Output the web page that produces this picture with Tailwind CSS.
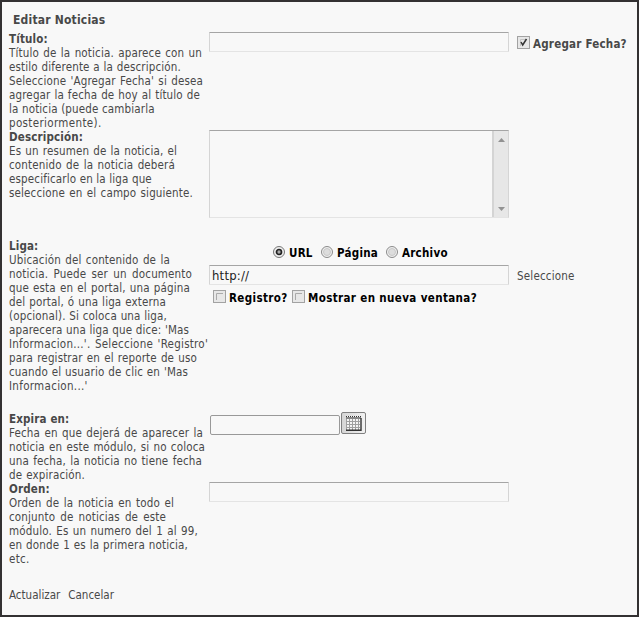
<!DOCTYPE html>
<html lang="es">
<head>
<meta charset="utf-8">
<title>Editar Noticias</title>
<script src="https://cdn.jsdelivr.net/npm/@tailwindcss/browser@4"></script>
</head>
<body class="h-[617px] w-[639px] overflow-hidden border-2 border-[#333132] bg-[#f8f8f8] pt-[9px] pl-[7px] font-['DejaVu_Sans_Condensed','DejaVu_Sans',sans-serif] text-[11.5px] leading-[14px] text-[#484848] [font-stretch:condensed]">
<h1 class="h-[21px] pl-1 text-[12px] leading-[18px] font-bold tracking-[0.2px]">Editar Noticias</h1>
<form class="whitespace-nowrap">
  <section class="flex h-[98px]">
    <div class="w-[200px] shrink-0 tracking-[0.15px] [&>p]:[text-align-last:justify]"><b class="block">Título:</b>
      <p class="w-[193px]">Título de la noticia. aparece con un</p>
      <p class="w-[172px]">estilo diferente a la descripción.</p>
      <p class="w-[194px]">Seleccione 'Agregar Fecha' si desea</p>
      <p class="w-[191px]">agregar la fecha de hoy al título de</p>
      <p class="w-[144px]">la noticia (puede cambiarla</p>
      <p class="w-[93px] tracking-[0.35px]">posteriormente).</p>
    </div>
    <input class="block h-5 w-[300px] rounded-[1px] border border-[#d5d5d5] border-t-[#a5a5a5] border-b-[#e4e4e4]">
    <label class="mt-1 ml-2 flex h-[14px] items-start font-bold tracking-[0.22px]"><svg class="mr-[3px]" width="13" height="13"><rect x=".5" y=".5" width="12" height="12" fill="#e7e7e7" stroke="#555" stroke-dasharray="1 1"/><path d="M3.5 10V3.5H10" fill="none" stroke="#c4c4c4"/><path d="M4 6L5.7 9L9.5 3" fill="none" stroke="#333" stroke-width="1.5"/></svg><span class="pt-px">Agregar Fecha?</span></label>
  </section>
  <section class="flex h-[109px]">
    <div class="w-[200px] shrink-0 tracking-[0.15px] [&>p]:[text-align-last:justify]"><b class="block">Descripción:</b>
      <p class="w-[168px]">Es un resumen de la noticia, el</p>
      <p class="w-[166px]">contenido de la noticia deberá</p>
      <p class="w-[141px]">especificarlo en la liga que</p>
      <p class="w-[184px]">seleccione en el campo siguiente.</p>
    </div>
    <div class="flex h-[88px] w-[300px] justify-end border border-[#d5d5d5] border-t-[#a5a5a5] border-b-[#e4e4e4]">
      <div class="flex w-4 flex-col items-center justify-between border-l-2 border-[#d4d4d4] bg-[#e7e7e7] pt-[7px] pb-[6px]"><svg width="7" height="4"><path d="M0 4L3.5 0L7 4Z" fill="#929292"/></svg><svg width="7" height="4"><path d="M0 0H7L3.5 4Z" fill="#929292"/></svg></div>
    </div>
  </section>
  <section class="flex h-[173px]">
    <div class="w-[200px] shrink-0 tracking-[0.15px] [&>p]:[text-align-last:justify]"><b class="block">Liga:</b>
      <p class="w-[161px]">Ubicación del contenido de la</p>
      <p class="w-[183px]">noticia. Puede ser un documento</p>
      <p class="w-[181px]">que esta en el portal, una página</p>
      <p class="w-[157px]">del portal, ó una liga externa</p>
      <p class="w-[158px]">(opcional). Si coloca una liga,</p>
      <p class="w-[180px]">aparecera una liga que dice: 'Mas</p>
      <p class="w-[199px] tracking-[0.25px]">Informacion...'. Seleccione 'Registro'</p>
      <p class="w-[188px]">para registrar en el reporte de uso</p>
      <p class="w-[179px]">cuando el usuario de clic en 'Mas</p>
      <p class="w-[79px] tracking-[0.3px]">Informacion...'</p>
    </div>
    <div class="w-[300px] shrink-0 pt-[7px]">
      <div class="flex h-[19px] pl-16 font-bold tracking-[0.25px] text-black">
        <label class="flex w-12"><svg class="mr-1 shrink-0" width="12" height="12"><circle cx="6" cy="6" r="5.5" fill="#eee" stroke="#777"/><circle cx="6" cy="6" r="2.5" fill="#aaa" stroke="#222" stroke-width="1.7"/></svg>URL</label>
        <label class="flex w-[65px]"><svg class="mr-1 shrink-0" width="12" height="12"><circle cx="6" cy="6" r="5.5" fill="#f0f0f0" stroke="#8b8b8b"/><circle cx="6" cy="6" r="3.5" fill="#ddd" stroke="#c8c8c8"/></svg>Página</label>
        <label class="flex"><svg class="mr-1 shrink-0" width="12" height="12"><circle cx="6" cy="6" r="5.5" fill="#f0f0f0" stroke="#8b8b8b"/><circle cx="6" cy="6" r="3.5" fill="#ddd" stroke="#c8c8c8"/></svg>Archivo</label>
      </div>
      <input class="block h-5 w-[300px] rounded-[1px] border border-[#d5d5d5] border-t-[#a5a5a5] border-b-[#e4e4e4] pl-0.5 text-[13px] tracking-[0.2px] text-[#222]" value="http://">
      <div class="mt-[5px] flex pl-1 font-bold tracking-[0.37px] text-black">
        <label class="flex w-[79px]"><svg class="mr-[3px] shrink-0" width="13" height="13"><rect x=".5" y=".5" width="12" height="12" fill="#e7e7e7" stroke="#555" stroke-dasharray="1 1"/><path d="M3.5 10V3.5H10" fill="none" stroke="#aaa"/></svg><span class="pt-px">Registro?</span></label>
        <label class="flex"><svg class="mr-[3px] shrink-0" width="13" height="13"><rect x=".5" y=".5" width="12" height="12" fill="#e7e7e7" stroke="#555" stroke-dasharray="1 1"/><path d="M3.5 10V3.5H10" fill="none" stroke="#aaa"/></svg><span class="pt-px">Mostrar en nueva ventana?</span></label>
      </div>
    </div>
    <a class="mt-[30px] ml-2 tracking-[0.2px]">Seleccione</a>
  </section>
  <section class="flex h-[70px]">
    <div class="w-[200px] shrink-0 tracking-[0.15px] [&>p]:[text-align-last:justify]"><b class="block">Expira en:</b>
      <p class="w-[194px]">Fecha en que dejerá de aparecer la</p>
      <p class="w-[196px]">noticia en este módulo, si no coloca</p>
      <p class="w-[193px]">una fecha, la noticia no tiene fecha</p>
      <p class="w-[76px]">de expiración.</p>
    </div>
    <input class="mt-[3px] ml-px block h-5 w-[130px] rounded-[2px] border border-[#999]">
    <button type="button" class="ml-px flex h-[22px] w-[25px] items-center justify-center rounded-[2px] border border-[#808080] bg-linear-to-r from-[#d5d5d5] to-[#f2f2f2]"><svg width="17" height="16"><path d="M1 1H16V15H1Z" fill="#f5f5f5"/><path d="M1 1.5H16" stroke="#333" stroke-dasharray="1 1"/><path d="M1 3H16" stroke="#888" stroke-width="2"/><path d="M1 6.5H15M1 9.5H15M1 12.5H15M1.5 4V15M4.5 4V15M7.5 4V15M10.5 4V15M13.5 4V15" stroke="#a0a0a0"/><path d="M1 15.2H16V3" fill="none" stroke="#333" stroke-width="1.4"/></svg></button>
  </section>
  <section class="flex h-[106px]">
    <div class="w-[200px] shrink-0 tracking-[0.15px] [&>p]:[text-align-last:justify]"><b class="block">Orden:</b>
      <p class="w-[165px]">Orden de la noticia en todo el</p>
      <p class="w-[157px]">conjunto de noticias de este</p>
      <p class="w-[189px]">módulo. Es un numero del 1 al 99,</p>
      <p class="w-[179px]">en donde 1 es la primera noticia,</p>
      <p class="w-[23px] tracking-[0.3px]">etc.</p>
    </div>
    <input class="block h-5 w-[300px] rounded-[1px] border border-[#d5d5d5] border-t-[#a5a5a5] border-b-[#e4e4e4]">
  </section>
  <footer class="flex gap-2"><a>Actualizar</a><a>Cancelar</a></footer>
</form>
</body>
</html>
